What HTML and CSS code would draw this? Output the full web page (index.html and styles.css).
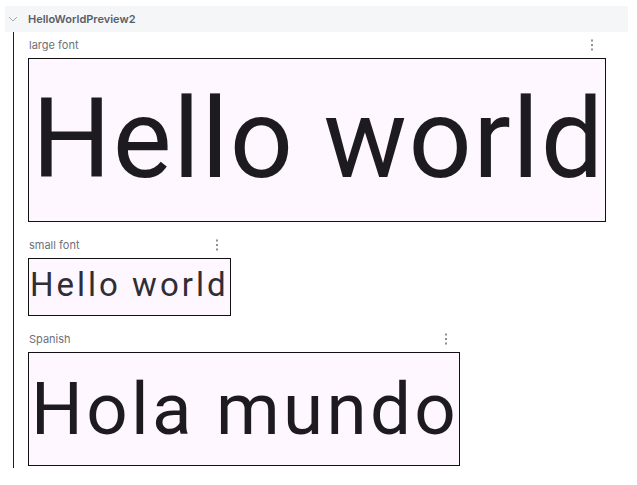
FILE: index.html
```html
<!DOCTYPE html>
<html>
<head>
<meta charset="utf-8">
<link rel="stylesheet" href="styles.css">
</head>
<body>
<div class="panel">
  <div class="group-header">
    <svg class="chevron" width="10" height="6" viewBox="0 0 10 6"><polyline points="1,1 5,5 9,1" fill="none" stroke="#a4a7ae" stroke-width="1"/></svg>
    <span class="group-title">HelloWorldPreview2</span>
  </div>
  <div class="group-body">
    <div class="item">
      <div class="item-header">
        <span class="label">large font</span>
        <svg class="kebab" width="4" height="12" viewBox="0 0 4 12"><rect x="1" y="0.5" width="2" height="2"/><rect x="1" y="5" width="2" height="2"/><rect x="1" y="9.5" width="2" height="2"/></svg>
      </div>
      <div class="preview preview-large">Hello world</div>
    </div>
    <div class="item">
      <div class="item-header">
        <span class="label">small font</span>
        <svg class="kebab" width="4" height="12" viewBox="0 0 4 12"><rect x="1" y="0.5" width="2" height="2"/><rect x="1" y="5" width="2" height="2"/><rect x="1" y="9.5" width="2" height="2"/></svg>
      </div>
      <div class="preview preview-small">Hello world</div>
    </div>
    <div class="item">
      <div class="item-header">
        <span class="label">Spanish</span>
        <svg class="kebab" width="4" height="12" viewBox="0 0 4 12"><rect x="1" y="0.5" width="2" height="2"/><rect x="1" y="5" width="2" height="2"/><rect x="1" y="9.5" width="2" height="2"/></svg>
      </div>
      <div class="preview preview-spanish">Hola mundo</div>
    </div>
  </div>
</div>
</body>
</html>
```

FILE: styles.css
```css
html, body {
  margin: 0;
  padding: 0;
  background: #ffffff;
}

.panel {
  width: 637px;
  padding-top: 6px;
}

.group-header {
  margin: 0 9px 0 5px;
  height: 26px;
  background: #f5f6f8;
  display: flex;
  align-items: center;
  padding-left: 3px;
  box-sizing: border-box;
}

.chevron {
  display: block;
  margin-right: 10px;
}

.group-title {
  font-family: Inter, "Noto Sans", sans-serif;
  font-size: 11px;
  font-weight: 600;
  color: #5a5d66;
}

.group-body {
  margin-left: 13px;
  border-left: 1px solid #1e1e1e;
  padding-left: 14px;
  padding-bottom: 2px;
  display: flex;
  flex-direction: column;
  align-items: flex-start;
  gap: 10px;
}

.item {
  display: flex;
  flex-direction: column;
}

.item-header {
  height: 26px;
  display: flex;
  align-items: center;
  justify-content: space-between;
  padding-left: 1px;
  padding-right: 12px;
}

.label {
  font-family: Inter, "Noto Sans", sans-serif;
  font-size: 11px;
  color: #6c707a;
}

.kebab {
  display: block;
  fill: #8e9099;
}

.preview {
  box-sizing: border-box;
  border: 1px solid #111111;
  background: #fef7ff;
  font-family: Roboto, sans-serif;
  color: #1d1b20;
  white-space: nowrap;
  overflow: hidden;
}

.preview-large {
  width: 578px;
  height: 164px;
  padding-left: 3px;
  font-size: 111px;
  line-height: 160px;
  letter-spacing: 1.45px;
}

.preview-small {
  width: 203px;
  height: 58px;
  padding-left: 1px;
  font-size: 33px;
  line-height: 51px;
  letter-spacing: 3px;
  color: #302e35;
}

.preview-spanish {
  width: 432px;
  height: 114px;
  padding-left: 2px;
  padding-top: 2px;
  font-size: 72.7px;
  line-height: 110px;
  letter-spacing: 3.3px;
}
```
